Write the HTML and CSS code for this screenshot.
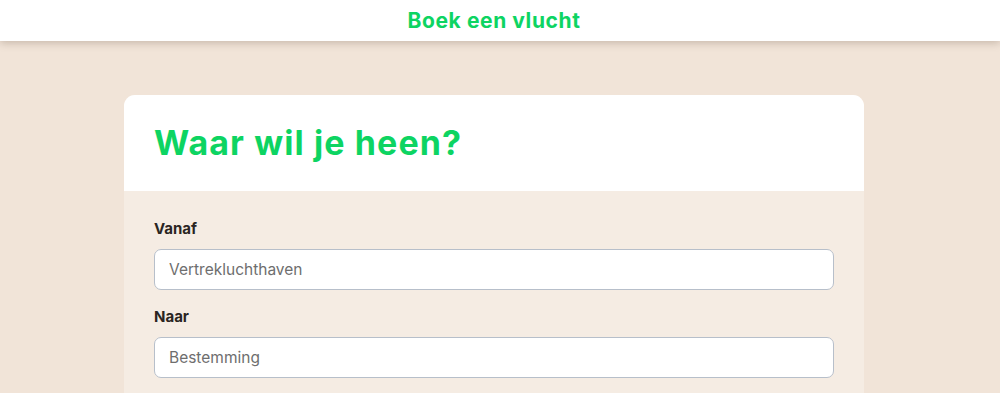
FILE: index.html
```html
<!DOCTYPE html>
<html lang="nl">
<head>
<meta charset="utf-8">
<title>Boek een vlucht</title>
<link rel="stylesheet" href="styles.css">
</head>
<body>
<header class="topbar">
  <h1 class="topbar-title">Boek een vlucht</h1>
</header>
<main class="page">
  <section class="card">
    <div class="card-head">
      <h2 class="card-title">Waar wil je heen?</h2>
    </div>
    <form class="card-body">
      <label class="field">
        <span class="field-label">Vanaf</span>
        <input class="field-input" type="text" placeholder="Vertrekluchthaven">
      </label>
      <label class="field">
        <span class="field-label">Naar</span>
        <input class="field-input" type="text" placeholder="Bestemming">
      </label>
    </form>
  </section>
</main>
</body>
</html>
```

FILE: styles.css
```css
* { box-sizing: border-box; }
html, body { margin: 0; padding: 0; }
body {
  background: #f1e4d8;
  font-family: Inter, "Noto Sans", "Liberation Sans", sans-serif;
  color: #222;
  min-height: 100vh;
}
.topbar {
  position: relative;
  z-index: 1;
  height: 41px;
  background: #fff;
  box-shadow: 0 2px 8px rgba(90, 70, 50, 0.28);
  display: flex;
  align-items: center;
  justify-content: center;
  padding-right: 12px;
}
.topbar-title {
  margin: 0;
  font-size: 21px;
  font-weight: 700;
  color: #0dd462;
  letter-spacing: 0.6px;
}
.page {
  padding: 54px 12px 0 0;
  display: flex;
  justify-content: center;
}
.card {
  width: 740px;
  border-radius: 11px;
  overflow: hidden;
  background: #f5ece3;
}
.card-head {
  background: #fff;
  height: 96px;
  padding: 0 30px 2px;
  display: flex;
  align-items: center;
}
.card-title {
  margin: 0;
  font-size: 34px;
  font-weight: 700;
  color: #0dd462;
  letter-spacing: 1.1px;
}
.card-body {
  padding: 28px 30px 30px;
  display: flex;
  flex-direction: column;
  gap: 17px;
}
.field {
  display: flex;
  flex-direction: column;
  gap: 10px;
}
.field-label {
  font-size: 15px;
  font-weight: 700;
  color: #2a2522;
  line-height: 20px;
}
.field-input {
  width: 100%;
  height: 41px;
  border: 1px solid #b7bfca;
  border-radius: 7px;
  background: #fff;
  padding: 0 14px;
  font-family: inherit;
  font-size: 15.5px;
  color: #333;
}
.field-input::placeholder {
  color: #6e6e6e;
}
```
